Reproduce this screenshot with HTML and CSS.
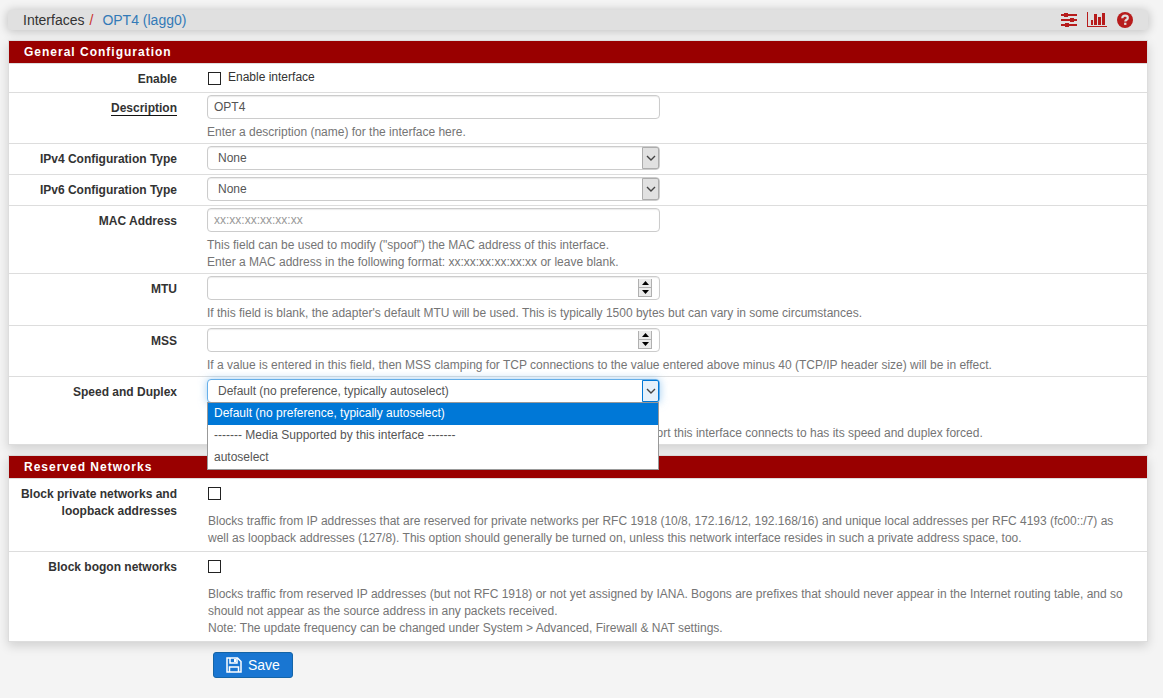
FILE: index.html
```html
<!DOCTYPE html>
<html lang="en">
<head>
<meta charset="utf-8">
<meta name="viewport" content="width=device-width, initial-scale=1">
<title>Interfaces: OPT4 (lagg0)</title>
<link rel="stylesheet" href="styles.css">
</head>
<body>
<header class="topbar">
  <nav class="crumbs" aria-label="Breadcrumb">
    <span>Interfaces</span><span class="slash">/</span><a href="#opt4">OPT4 (lagg0)</a>
  </nav>
  <nav class="tools" aria-label="Page tools">
    <a href="#settings" aria-label="Related settings">
      <svg width="16" height="16" viewBox="0 0 16 16" fill="currentColor"><path d="M0 2h16v2H0zM0 7h16v2H0zM0 12h16v2H0z"/><path d="M3 1h4v4H3zM9 6h4v4H9zM4 11h4v4H4z"/></svg>
    </a>
    <a href="#status" aria-label="Related status">
      <svg width="20" height="16" viewBox="0 0 20 16" fill="currentColor"><path d="M0 0h1v14h19v1H0zM4 8h2v5H4zM7 2h3v11H7zM11 5h3v8h-3zM15 1h3v12h-3z"/></svg>
    </a>
    <a href="#help" aria-label="Help">
      <svg width="16" height="16" viewBox="0 0 16 16"><circle cx="8" cy="8" r="8" fill="currentColor"/><path d="M5.300 6.200C5.400 4.500 6.500 3.700 8.100 3.700c1.600 0 2.700.9 2.700 2.200 0 1.900-2.500 1.800-2.500 3.600" fill="none" stroke="#e0e0e0" stroke-width="2.200"/><path d="M7.100 10.700h2.300v2.200H7.100z" fill="#e0e0e0"/></svg>
    </a>
  </nav>
</header>

<form>
  <section class="panel">
    <h2 class="panel-title">General Configuration</h2>
    <div class="row row-check">
      <span class="label">Enable</span>
      <div class="content">
        <label class="check"><input type="checkbox" class="box"><span>Enable interface</span></label>
      </div>
    </div>
    <div class="row">
      <label class="label" for="descr"><span class="required">Description</span></label>
      <div class="content">
        <input class="control" id="descr" type="text" value="OPT4">
        <p class="help">Enter a description (name) for the interface here.</p>
      </div>
    </div>
    <div class="row">
      <label class="label" for="type4">IPv4 Configuration Type</label>
      <div class="content">
        <div class="field">
          <select class="control select" id="type4"><option>None</option></select>
          <span class="arrow"><svg width="10" height="6" viewBox="0 0 10 6"><path d="M1 1l4 4 4-4"/></svg></span>
        </div>
      </div>
    </div>
    <div class="row">
      <label class="label" for="type6">IPv6 Configuration Type</label>
      <div class="content">
        <div class="field">
          <select class="control select" id="type6"><option>None</option></select>
          <span class="arrow"><svg width="10" height="6" viewBox="0 0 10 6"><path d="M1 1l4 4 4-4"/></svg></span>
        </div>
      </div>
    </div>
    <div class="row">
      <label class="label" for="mac">MAC Address</label>
      <div class="content">
        <input class="control" id="mac" type="text" placeholder="xx:xx:xx:xx:xx:xx">
        <p class="help">This field can be used to modify ("spoof") the MAC address of this interface.<br>Enter a MAC address in the following format: xx:xx:xx:xx:xx:xx or leave blank.</p>
      </div>
    </div>
    <div class="row row-roomy">
      <label class="label" for="mtu">MTU</label>
      <div class="content">
        <div class="field">
          <input class="control number" id="mtu" type="number">
          <span class="spinner">
            <button type="button" aria-label="Increase MTU"><svg width="7" height="4" viewBox="0 0 7 4"><path d="M0 4l3.500-4L7 4z"/></svg></button>
            <button type="button" aria-label="Decrease MTU"><svg width="7" height="4" viewBox="0 0 7 4"><path d="M0 0l3.500 4L7 0z"/></svg></button>
          </span>
        </div>
        <p class="help">If this field is blank, the adapter's default MTU will be used. This is typically 1500 bytes but can vary in some circumstances.</p>
      </div>
    </div>
    <div class="row">
      <label class="label" for="mss">MSS</label>
      <div class="content">
        <div class="field">
          <input class="control number" id="mss" type="number">
          <span class="spinner">
            <button type="button" aria-label="Increase MSS"><svg width="7" height="4" viewBox="0 0 7 4"><path d="M0 4l3.500-4L7 4z"/></svg></button>
            <button type="button" aria-label="Decrease MSS"><svg width="7" height="4" viewBox="0 0 7 4"><path d="M0 0l3.500 4L7 0z"/></svg></button>
          </span>
        </div>
        <p class="help">If a value is entered in this field, then MSS clamping for TCP connections to the value entered above minus 40 (TCP/IP header size) will be in effect.</p>
      </div>
    </div>
    <div class="row">
      <label class="label" for="media">Speed and Duplex</label>
      <div class="content">
        <div class="field open">
          <select class="control select" id="media"><option>Default (no preference, typically autoselect)</option></select>
          <span class="arrow"><svg width="10" height="6" viewBox="0 0 10 6"><path d="M1 1l4 4 4-4"/></svg></span>
          <ul class="menu" role="listbox" aria-label="Speed and Duplex">
            <li class="item chosen" role="option" aria-selected="true">Default (no preference, typically autoselect)</li>
            <li class="item" role="option" aria-selected="false">------- Media Supported by this interface -------</li>
            <li class="item" role="option" aria-selected="false">autoselect</li>
          </ul>
        </div>
        <p class="help">Explicitly set speed and duplex mode for this interface.<br>WARNING: MUST be set to autoselect (automatically negotiates speed) unless the port this interface connects to has its speed and duplex forced.</p>
      </div>
    </div>
  </section>

  <section class="panel">
    <h2 class="panel-title">Reserved Networks</h2>
    <div class="row row-block">
      <label class="label" for="blockpriv">Block private networks and loopback addresses</label>
      <div class="content">
        <input type="checkbox" class="box" id="blockpriv">
        <p class="help">Blocks traffic from IP addresses that are reserved for private networks per RFC 1918 (10/8, 172.16/12, 192.168/16) and unique local addresses per RFC 4193 (fc00::/7) as well as loopback addresses (127/8). This option should generally be turned on, unless this network interface resides in such a private address space, too.</p>
      </div>
    </div>
    <div class="row row-block">
      <label class="label" for="blockbogons">Block bogon networks</label>
      <div class="content">
        <input type="checkbox" class="box" id="blockbogons">
        <p class="help">Blocks traffic from reserved IP addresses (but not RFC 1918) or not yet assigned by IANA. Bogons are prefixes that should never appear in the Internet routing table, and so should not appear as the source address in any packets received.<br>Note: The update frequency can be changed under System &gt; Advanced, Firewall &amp; NAT settings.</p>
      </div>
    </div>
  </section>

  <button class="save" type="submit">
    <svg width="16" height="16" viewBox="0 0 16 16" fill="none" stroke="currentColor" stroke-width="1.500"><path d="M1 1h10.500L15 4.500V15H1z"/><path d="M4 1v5h7V1M3.500 15v-5h9v5"/><path d="M8 2h2v3H8z" fill="currentColor" stroke="none"/></svg>
    <span>Save</span>
  </button>
</form>
</body>
</html>
```
FILE: styles.css
```css
* { box-sizing: border-box; }

body {
  margin: 0;
  padding: 10px 15px 20px 8px;
  background: #f4f4f4;
  color: #333;
  font-family: "Liberation Sans", Arial, sans-serif;
  font-size: 12px;
  line-height: 17px;
}

a { text-decoration: none; }

.topbar {
  display: flex;
  justify-content: space-between;
  align-items: center;
  height: 20px;
  margin-bottom: 10px;
  padding: 0 15px;
  border-radius: 4px;
  background: #e0e0e0;
  box-shadow: 0 1px 10px 1px rgba(0, 0, 0, 0.2);
}

.crumbs { display: flex; font-size: 14px; }
.crumbs a { color: #337ab7; }
.slash { margin: 0 9px 0 5px; color: #c9302c; }

.tools { display: flex; align-items: center; gap: 10px; }
.tools a { display: flex; color: #b71c1c; }

.panel {
  position: relative;
  margin-bottom: 10px;
  border: 1px solid #ddd;
  background: #fff;
  box-shadow: 0 4px 10px rgba(0, 0, 0, 0.15);
}
.panel:first-child { z-index: 1; }

.panel-title {
  margin: 0;
  padding: 3px 15px 2px;
  background: #900;
  color: #fff;
  font-size: 12px;
  font-weight: bold;
  letter-spacing: 1px;
}

.row {
  display: grid;
  grid-template-columns: 168px 1fr;
  column-gap: 30px;
  padding: 2px 8px 2px 0;
  border-top: 1px solid #ddd;
}

.label { padding: 5px 0 4px 8px; text-align: right; font-weight: bold; }
.required { border-bottom: 1px solid #111; }

.row-roomy { padding-bottom: 3px; }
.row-check { padding-bottom: 0; }
.check { display: flex; align-items: center; gap: 7px; padding: 3px 0 3px 1px; }

.box {
  appearance: none;
  display: block;
  width: 13px;
  height: 13px;
  margin: 0;
  border: 1px solid #222;
  background: #fff;
}
.check .box { margin-top: 2px; }

.field { position: relative; max-width: 453px; }

.control {
  display: block;
  width: 100%;
  max-width: 453px;
  height: 24px;
  margin: 0;
  padding: 0 6px;
  border: 1px solid #ccc;
  border-radius: 4px;
  outline: 0;
  background: #fff;
  box-shadow: inset 0 1px 1px rgba(0, 0, 0, 0.08);
  color: #555;
  font: inherit;
}
.control::placeholder { color: #999; opacity: 1; }

.select { appearance: none; padding: 0 30px 0 10px; }
.number { appearance: textfield; }
.number::-webkit-inner-spin-button { display: none; }

.arrow {
  position: absolute;
  top: 1px;
  right: 1px;
  display: flex;
  align-items: center;
  justify-content: center;
  width: 17px;
  height: 22px;
  border: 1px solid #adadad;
  border-radius: 0 2px 2px 0;
  background: #e1e1e1;
  pointer-events: none;
}
.arrow path { fill: none; stroke: #444; stroke-width: 1.4; }

.spinner {
  position: absolute;
  top: 3px;
  right: 8px;
  display: flex;
  flex-direction: column;
  width: 14px;
}
.spinner button {
  display: flex;
  align-items: center;
  justify-content: center;
  height: 9px;
  padding: 0;
  border: 1px solid #b0b0b0;
  border-top: 0;
  background: #ebebeb;
}

.open .control { border-color: #66afe9; box-shadow: 0 0 8px rgba(102, 175, 233, 0.6); }
.open .arrow { border-color: #0078d7; background: #e5f1fb; }

.menu {
  position: absolute;
  top: 23px;
  left: 0;
  right: 1px;
  z-index: 2;
  margin: 0;
  padding: 0;
  border: 1px solid #999;
  background: #fff;
  color: #555;
  list-style: none;
}
.item { padding: 2px 6px 3px; }
.chosen { background: #0078d7; color: #fff; }

.help { margin: 5px 0 0; color: #757575; }

.row-block { padding-bottom: 4px; }
.row-block .content { padding: 6px 4px 0 1px; }
.row-block .help { margin-top: 13px; }

.save {
  display: flex;
  align-items: center;
  gap: 6px;
  height: 26px;
  margin-left: 205px;
  padding: 0 12px;
  border: 1px solid #1565a8;
  border-radius: 3px;
  background: #1976d2;
  color: #fff;
  font-family: inherit;
  font-size: 14px;
}
```
